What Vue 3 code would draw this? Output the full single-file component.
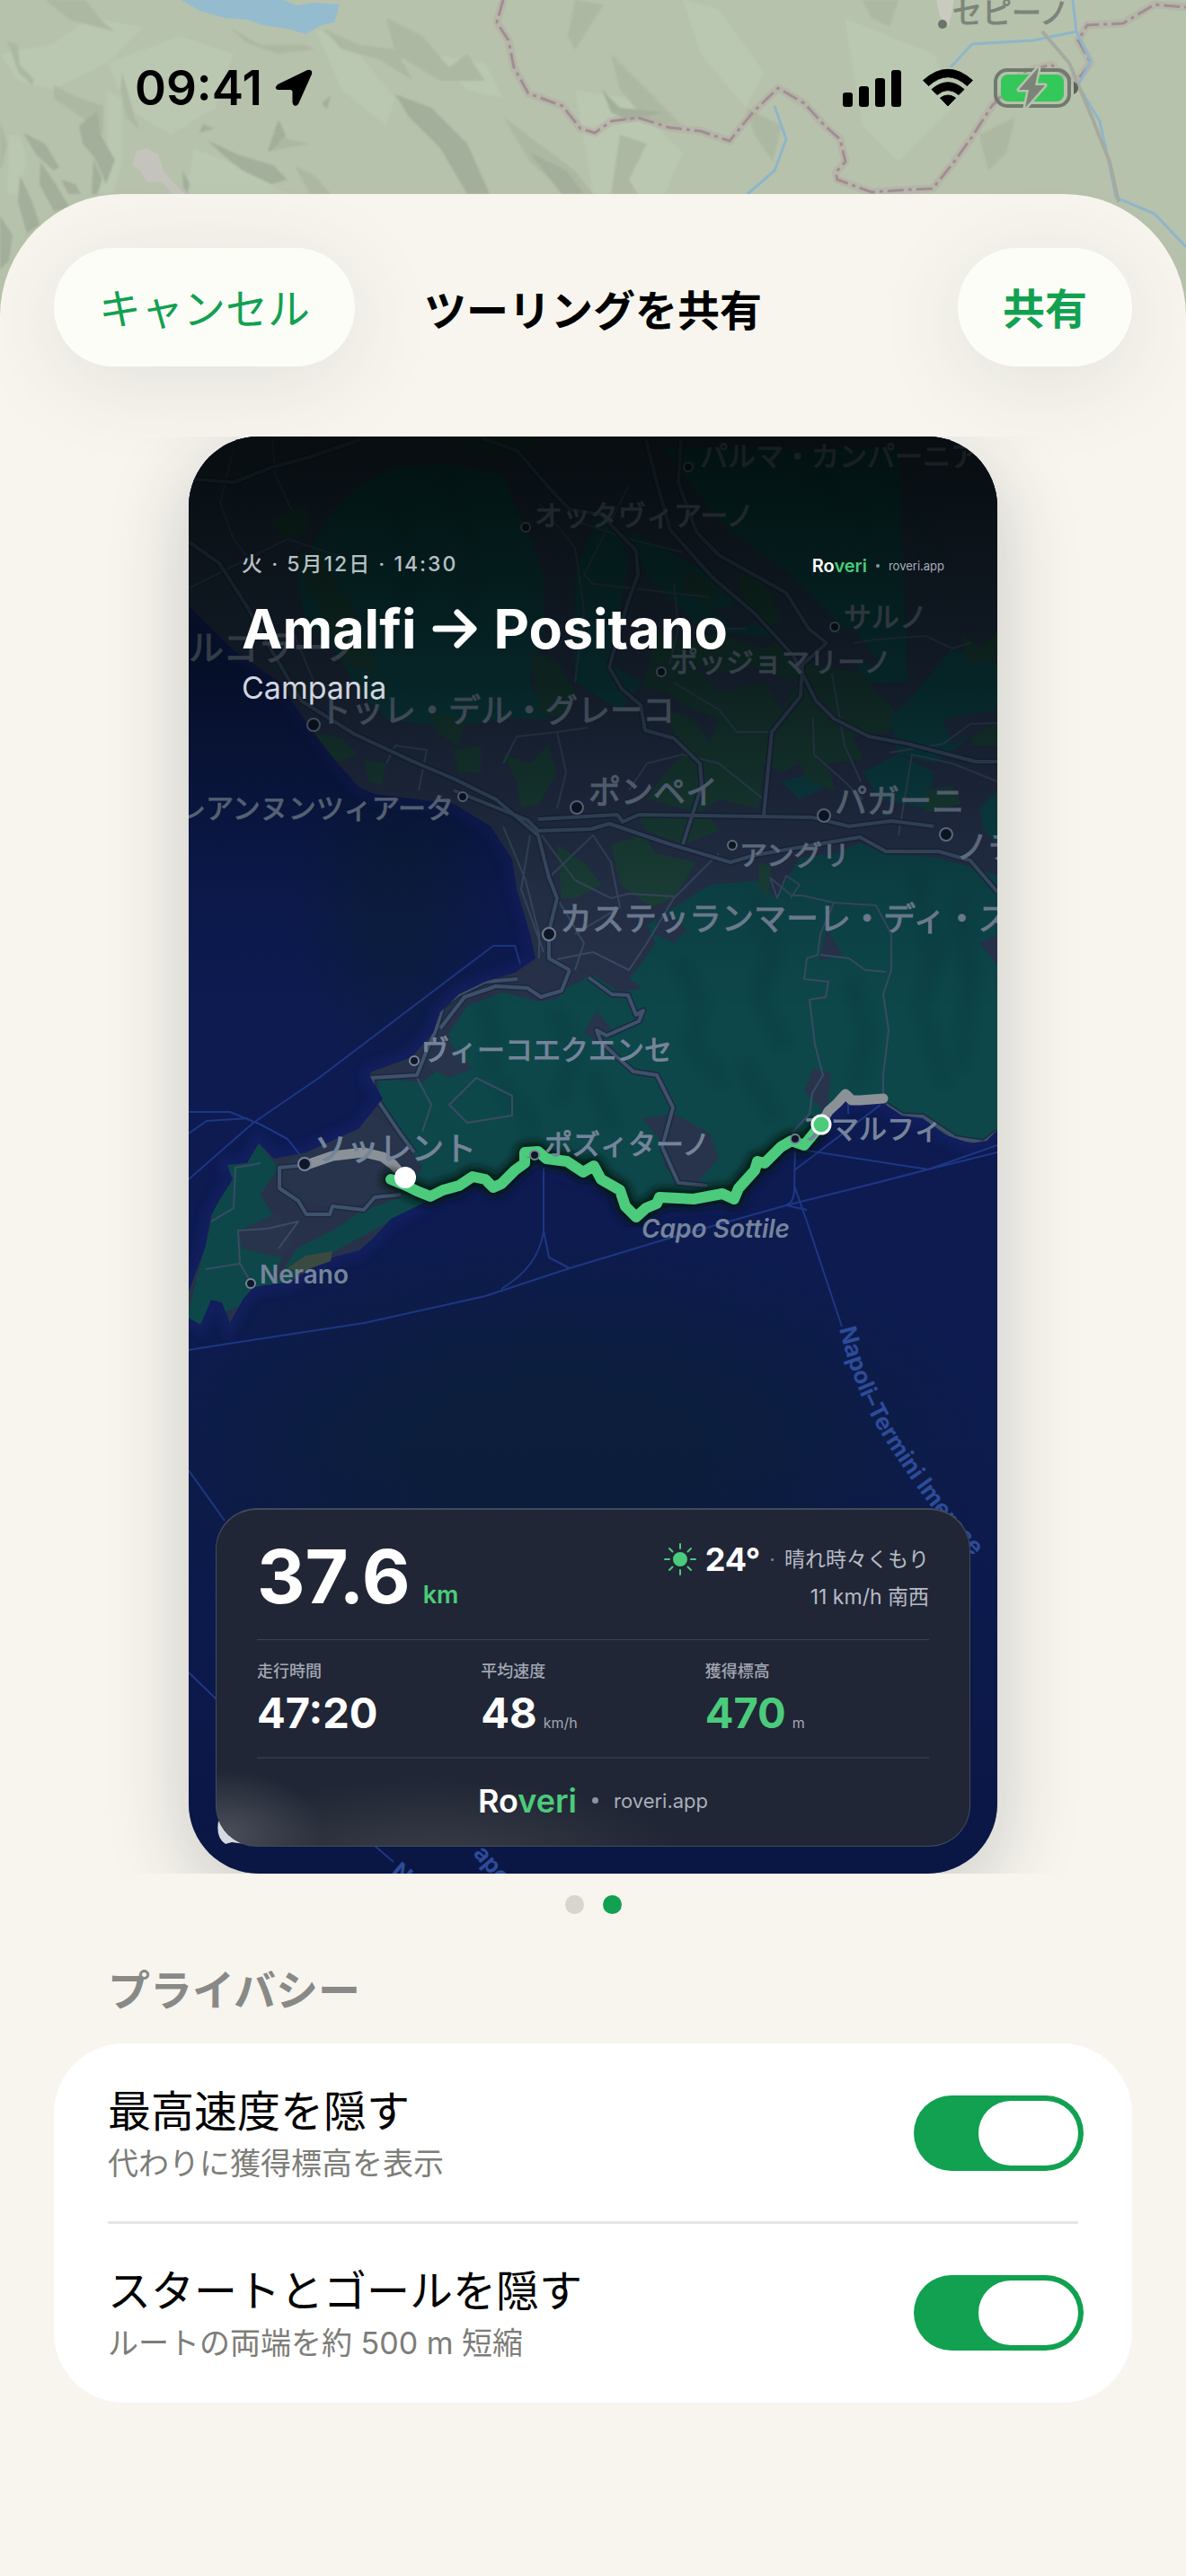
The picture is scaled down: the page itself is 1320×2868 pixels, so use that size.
<template>
  <div class="screen">
    <svg class="backdrop" viewBox="0 0 1320 400" preserveAspectRatio="xMidYMin slice" aria-hidden="true">
      <defs>
        <filter id="haze"><feGaussianBlur stdDeviation="1" /></filter>
      </defs>
      <rect width="1320" height="400" fill="#b6c2ab" />
      <g filter="url(#haze)">
        <path v-for="d in slopes.light" :key="d" :d="d" fill="#bac8b1" />
        <path v-for="d in slopes.mid" :key="d" :d="d" fill="#adb8a2" />
        <path v-for="d in slopes.dark" :key="d" :d="d" fill="#a3af9a" />
      </g>
      <path d="M202 0 222 12 250 20 276 22 292 28 320 32 340 38 358 28 372 25 378 5 350 3 330 6 315 0z" fill="#95bbcf" />
      <path d="M152 168 164 165 176 172 182 190 192 202 206 216H192L180 202 164 203 156 190 147 184z" fill="#c5c4bc" />
      <path d="M1042 0 1046 18 1056 30 1062 0z" fill="#c9cac0" />
      <g fill="none" stroke="#b4a9a4" stroke-width="9" stroke-linejoin="round" opacity="0.45">
        <path d="M560 0 553 25 566 45 572 75 588 104 626 118 646 143 662 148 680 135 710 131 745 142 780 146 812 157 838 125 866 98 895 115 918 140 935 155 941 180 930 192 932 200 970 214 1012 211 1038 210 1062 180 1080 155 1104 118 1140 80 1170 72 1197 92 1214 70 1200 45 1210 28 1250 26 1285 5 1320 8" />
      </g>
      <g fill="none" stroke="#a18d93" stroke-width="3" stroke-dasharray="18 5 4 5">
        <path d="M560 0 553 25 566 45 572 75 588 104 626 118 646 143 662 148 680 135 710 131 745 142 780 146 812 157 838 125 866 98 895 115 918 140 935 155 941 180 930 192 932 200 970 214 1012 211 1038 210 1062 180 1080 155 1104 118 1140 80 1170 72 1197 92 1214 70 1200 45 1210 28 1250 26 1285 5 1320 8" />
      </g>
      <g fill="none" stroke="#8fb5cb" stroke-width="3">
        <path d="M1194 0 1198 35 1150 45 1082 49 1058 75M1198 35 1214 68 1200 95 1224 135 1234 180 1242 220 1285 238 1320 275M862 118 875 155 862 190 832 216" />
      </g>
      <path d="M1160 35 1190 70 1215 130 1235 180 1245 225" fill="none" stroke="#a5aaa0" stroke-width="4" />
      <circle cx="1049" cy="27" r="5" fill="#6b736a" />
      <text class="backdrop-label" x="1060" y="26">セピーノ</text>
    </svg>

    <header class="status">
      <div class="status-left">
        <span class="clock">09:41</span>
        <svg width="42" height="42" viewBox="0 0 42 42" aria-hidden="true">
          <path d="M36 1 3 17Q-1.500 21 3 23H17Q19.500 23 19.500 25.500V37Q21 43.500 26 39L41 5.500Q42 0 36 1z" />
        </svg>
      </div>
      <div class="status-right">
        <svg width="66" height="44" viewBox="0 0 66 44" aria-hidden="true">
          <rect x="0" y="27" width="11" height="16" rx="3" />
          <rect x="18" y="20" width="11" height="23" rx="3" />
          <rect x="36" y="11" width="11" height="32" rx="3" />
          <rect x="54" y="2" width="11" height="41" rx="3" />
        </svg>
        <svg width="58" height="44" viewBox="0 0 58 44" aria-hidden="true">
          <path d="M1.500 13.500Q29-11 56.500 13.500L50.500 19.500Q29 0 7.500 19.500zM11 23.500Q29 8 47 23.500L41 29.500Q29 19.500 17 29.500zM20.500 33Q29 27 37.500 33L29 42z" stroke="#000" stroke-linejoin="round" />
        </svg>
        <svg width="94" height="48" viewBox="0 0 94 48" aria-hidden="true">
          <rect x="2" y="4" width="82" height="40" rx="13" fill="none" stroke="#707a6c" stroke-width="4" />
          <rect x="8" y="9" width="70" height="30" rx="8" fill="#34c759" />
          <path d="M89 17Q94 19 94 24T89 31z" fill="#5b645a" />
          <path d="M49 2 28 26H39L35 46 57 21H46L50 2z" fill="#7a8577" stroke="#b6c2ab" stroke-width="5" stroke-linejoin="round" paint-order="stroke" />
        </svg>
      </div>
    </header>

    <main class="sheet">
      <div class="toolbar">
        <button type="button" class="pill">キャンセル</button>
        <h1 class="toolbar-title">ツーリングを共有</h1>
        <button type="button" class="pill pill--strong">共有</button>
      </div>

      <div class="carousel">
        <article class="card">
          <svg class="map" viewBox="210 486 900 1600" preserveAspectRatio="xMidYMid slice" aria-hidden="true">
            <defs>
              <clipPath id="land"><path :d="land" /></clipPath>
              <linearGradient id="shade" x1="0" y1="0" x2="0" y2="1">
                <stop offset="0" stop-color="#000504" stop-opacity="0.82" />
                <stop offset="0.1" stop-color="#000605" stop-opacity="0.66" />
                <stop offset="0.17" stop-color="#000608" stop-opacity="0.54" />
                <stop offset="0.24" stop-color="#00060c" stop-opacity="0.34" />
                <stop offset="0.32" stop-color="#000610" stop-opacity="0.12" />
                <stop offset="0.4" stop-color="#000610" stop-opacity="0" />
                <stop offset="1" stop-color="#000610" stop-opacity="0" />
              </linearGradient>
              <radialGradient id="deep" cx="0.5" cy="0.5" r="0.5">
                <stop offset="0.3" stop-color="#0c1e3c" />
                <stop offset="1" stop-color="#0c1e3c" stop-opacity="0" />
              </radialGradient>
              <linearGradient id="floor" x1="0" y1="0" x2="0" y2="1">
                <stop offset="0" stop-color="#08143c" stop-opacity="0" />
                <stop offset="1" stop-color="#08143c" stop-opacity="0.6" />
              </linearGradient>
              <filter id="soft"><feGaussianBlur stdDeviation="5" /></filter>
            </defs>
            <rect x="210" y="486" width="900" height="1600" fill="#0d1b51" />
            <ellipse cx="620" cy="1620" rx="540" ry="260" fill="url(#deep)" />
            <ellipse cx="440" cy="1010" rx="110" ry="200" fill="url(#deep)" opacity="0.7" />
            <rect x="210" y="1600" width="900" height="486" fill="url(#floor)" />
            <path :d="land" fill="none" stroke="#15206a" stroke-width="20" opacity="0.5" filter="url(#soft)" />
            <path v-for="d in ferries" :key="d" class="ferry" :d="d" />
            <path :d="land" fill="#27324a" />
            <g clip-path="url(#land)">
              <path v-for="d in hills" :key="d" :d="d" fill="#0d474a" />
              <path v-for="d in farms" :key="d" :d="d" fill="#1c4339" />
              <path v-for="d in towns" :key="d" :d="d" fill="#27344c" />
              <path class="ridges" :d="ridges" filter="url(#soft)" />
              <path v-for="d in lanes" :key="d" class="lane" :d="d" />
              <path v-for="d in roads" :key="d" class="road-casing" :d="d" />
              <path v-for="d in roads" :key="d" class="road" :d="d" />
            </g>
            <path d="M320 1412 340 1398 370 1393 368 1404 335 1416z" fill="#3b4a40" />

            <path class="hidden-route" d="M341 1297 370 1287 405 1283 426 1288 438 1297 449 1310M914 1252 922 1237 932 1228 941 1218 948 1225 957 1225 983 1223" />
            <path class="route-shadow" :d="route" filter="url(#soft)" />
            <path class="route" :d="route" />

            <g v-for="place in places" :key="place.name">
              <circle v-if="place.dot" class="place-dot" :cx="place.dot[0]" :cy="place.dot[1]" :r="place.size > 32 ? 7 : 5" />
              <text
                class="place"
                :x="place.x"
                :y="place.y"
                :font-size="place.size"
                :text-anchor="place.end ? 'end' : 'start'"
              >{{ place.name }}</text>
            </g>
            <text class="place place--latin place--cape" x="714" y="1378">Capo Sottile</text>
            <circle class="place-dot" cx="279" cy="1429" r="5" />
            <text class="place place--latin" x="289" y="1429">Nerano</text>

            <path id="ferry-line" d="M934 1479Q950 1545 977 1590T1040 1682 1150 1800" fill="none" />
            <text class="ferry-name"><textPath href="#ferry-line">Napoli–Termini Imerese</textPath></text>
            <text class="ferry-name" transform="translate(434 2086) rotate(40)">N</text>
            <text class="ferry-name" transform="translate(526 2064) rotate(50)">apo</text>

            <rect x="210" y="486" width="900" height="1600" fill="url(#shade)" />
            <circle cx="451" cy="1311" r="12" fill="#fff" />
            <circle cx="914" cy="1252" r="10" fill="#4bcb7b" stroke="#fff" stroke-width="3" />
            <path d="M243 2028Q240 2046 251 2053L258 2051Q264 2052 275 2053V2020z" fill="#d5dae0" />
          </svg>

          <div class="card-head">
            <div class="card-meta">
              <span class="card-date">火 · 5月12日 · 14:30</span>
              <span class="brand brand--small"><b>Ro<i>veri</i></b><span class="brand-dot"></span><span class="brand-url">roveri.app</span></span>
            </div>
            <h2 class="card-title">
              Amalfi
              <svg width="50" height="44" viewBox="0 0 50 44" role="img" aria-label="→">
                <path d="M4 22H45M28 4 46 22 28 40" fill="none" stroke="#fff" stroke-width="7" stroke-linecap="round" stroke-linejoin="round" />
              </svg>
              Positano
            </h2>
            <p class="card-region">Campania</p>
          </div>

          <section class="panel">
            <div class="summary">
              <p class="distance">37.6<span>km</span></p>
              <div class="weather">
                <p class="weather-main">
                  <svg width="36" height="36" viewBox="0 0 36 36" aria-hidden="true">
                    <circle cx="18" cy="18" r="8" fill="#4bcb7b" />
                    <path d="M18 1V6M18 30V35M1 18H6M30 18H35M6 6 9.500 9.500M26.500 26.500 30 30M6 30 9.500 26.500M26.500 9.500 30 6" stroke="#4bcb7b" stroke-width="2" stroke-linecap="round" />
                  </svg>
                  <b>24°</b><span class="faint">·</span><span>晴れ時々くもり</span>
                </p>
                <p>11 km/h 南西</p>
              </div>
            </div>
            <dl class="stats">
              <div v-for="stat in stats" :key="stat.label" :class="{ 'stat--accent': stat.accent }">
                <dt>{{ stat.label }}</dt>
                <dd>{{ stat.value }}<span v-if="stat.unit">{{ stat.unit }}</span></dd>
              </div>
            </dl>
            <div class="brand brand--large"><b>Ro<i>veri</i></b><span class="brand-dot"></span><span class="brand-url">roveri.app</span></div>
          </section>
        </article>
      </div>

      <div class="pager">
        <button
          v-for="page in 2"
          :key="page"
          type="button"
          class="pager-dot"
          :class="{ 'pager-dot--active': state.page === page }"
          :aria-label="`${page}`"
          @click="state.page = page"
        ></button>
      </div>

      <section class="privacy">
        <h2 class="privacy-title">プライバシー</h2>
        <div class="options">
          <label v-for="option in options" :key="option.key" class="option">
            <span class="option-text">
              <span class="option-name">{{ option.name }}</span>
              <span class="option-note">{{ option.note }}</span>
            </span>
            <input v-model="state[option.key]" type="checkbox" role="switch" class="switch" />
          </label>
        </div>
      </section>
    </main>
  </div>
</template>

<script setup>
  import { reactive } from 'vue';

  const state = reactive({ page: 2, hideSpeed: true, hideEnds: true });

  const stats = [
    { label: '走行時間', value: '47:20' },
    { label: '平均速度', value: '48', unit: 'km/h' },
    { label: '獲得標高', value: '470', unit: 'm', accent: true }
  ];

  const options = [
    { key: 'hideSpeed', name: '最高速度を隠す', note: '代わりに獲得標高を表示' },
    { key: 'hideEnds', name: 'スタートとゴールを隠す', note: 'ルートの両端を約 500 m 短縮' }
  ];

  const places = [
    { name: 'パルマ・カンパーニア', x: 779, y: 519, size: 31, dot: [766, 520] },
    { name: 'オッタヴィアーノ', x: 595, y: 585, size: 31, dot: [585, 587] },
    { name: 'サルノ', x: 939, y: 698, size: 31, dot: [929, 698] },
    { name: 'ポッジョマリーノ', x: 746, y: 748, size: 31, dot: [736, 748] },
    { name: 'ルコラーノ', x: 402, y: 735, size: 39, end: true },
    { name: 'トッレ・デル・グレーコ', x: 355, y: 804, size: 36, dot: [349, 807] },
    { name: 'ポンペイ', x: 655, y: 895, size: 36, dot: [642, 899] },
    { name: 'パガーニ', x: 929, y: 905, size: 36, dot: [917, 908] },
    { name: 'レアンヌンツィアータ', x: 505, y: 911, size: 31, end: true, dot: [515, 887] },
    { name: 'アングリ', x: 823, y: 963, size: 31, dot: [815, 941] },
    { name: 'ノチ', x: 1064, y: 956, size: 36, dot: [1053, 929] },
    { name: 'カステッランマーレ・ディ・ス', x: 623, y: 1036, size: 36, dot: [611, 1040] },
    { name: 'ヴィーコエクエンセ', x: 469, y: 1180, size: 31, dot: [461, 1181] },
    { name: 'ソッレント', x: 350, y: 1292, size: 36, dot: [339, 1296] },
    { name: 'ポズィターノ', x: 606, y: 1285, size: 31, dot: [595, 1286] },
    { name: 'アマルフィ', x: 894, y: 1268, size: 31, dot: [885, 1268] }
  ];

  // hillshade facets behind the status bar
  const slopes = {
    light: [
      'M0 60 60 48 100 20 160 30 120 70 60 100 20 90z',
      'M120 70 200 40 260 60 240 120 190 150 140 120z',
      'M10 150 22 150 30 180 20 216H8z',
      'M118 100 135 110 136 180 126 216H110L120 160z',
      'M215 165 250 178 300 205 320 216H206L212 190z',
      'M350 30 400 60 440 110 430 140 380 100z',
      'M640 100 700 110 760 170 740 216H660z',
      'M760 0 800 10 850 80 830 120 780 60z',
      'M480 60 540 70 560 110 520 100z',
      'M940 20 1040 60 1060 120 1000 180 960 140z'
    ],
    mid: [
      'M50 0H95L115 25 128 35 100 28 78 22z',
      'M8 45 20 50 22 72 38 88 36 95 20 80z',
      'M60 95 85 108 115 118 115 150 90 130 60 110z',
      'M0 135 8 160 4 180 0 190z',
      'M255 30 290 50 340 50 350 55 310 60 275 48z',
      'M360 32 400 50 440 55 460 90 420 65 380 55z',
      'M310 135 320 155 346 160 300 168z',
      'M328 185 350 195 368 216H345z',
      'M136 80 150 130 156 145 140 130 134 100z',
      'M430 20 470 40 500 75 520 60 540 90 490 90 440 60z',
      'M640 0 672 5 640 55 632 40z',
      'M680 60 710 90 740 120 760 140 720 135 690 100z',
      'M690 150 720 160 700 200 710 216H680z',
      'M830 120 870 140 860 180 840 150z',
      'M560 130 600 160 640 190 660 216H630L590 180z',
      'M960 0H1000L990 30 970 20z',
      'M1090 150 1130 130 1120 170 1100 190z'
    ],
    dark: [
      'M88 140 108 124 112 150 128 178 118 205 105 175 92 160z',
      'M26 148 50 160 66 186 60 190 40 172z',
      'M45 180 62 205 78 232 60 235 44 205z',
      'M22 195 36 225 44 250 30 260 20 225z',
      'M68 200 84 205 90 216H76z',
      'M104 178 114 200 108 216H102z',
      'M232 157 250 165 264 172 304 184 320 200 302 205 270 190 250 174z',
      'M203 190 211 204 209 216 204 208z',
      'M219 155 226 138 238 143 222 148z',
      'M310 133 318 150 302 168 298 168z',
      'M358 115 368 106 364 122z',
      'M440 105 480 120 520 160 545 216H520L490 165 455 130z',
      'M590 170 630 190 650 216H625z',
      'M670 100 690 120 740 125 700 135 680 125z',
      'M0 240 14 262 10 290 0 300z'
    ]
  };

  const route = 'M435 1313 452 1320 464 1326 479 1332 493 1325 511 1320 526 1310 540 1313 549 1322 558 1318 573 1303 584 1295 584 1283 599 1282 608 1290 631 1293 649 1305 661 1298 669 1313 690 1325 696 1343 708 1355 719 1345 731 1340 734 1333 772 1335 804 1329 817 1335 822 1323 840 1303 843 1293 851 1295 869 1277 881 1270 895 1275 913 1253';

  const land = 'M210 486V675L259 723 311 760 347 813 376 850 400 877 417 884 505 895 546 920 570 957 575 990 590 1040 596 1067 573 1083 540 1093 511 1107 490 1127 482 1150 458 1177 414 1193 411 1197 426 1223 399 1257 341 1283 305 1290 288 1273 275 1295 253 1297 259 1313 245 1335 235 1353 229 1387 212 1433 205 1450 210 1467 223 1475 235 1447 247 1450 256 1473 270 1447 282 1433 323 1427 350 1410 370 1400 400 1392 417 1377 435 1357 464 1343 479 1335 526 1313 549 1325 584 1300 600 1292 649 1308 669 1316 690 1328 700 1350 731 1343 772 1338 817 1338 840 1305 881 1274 914 1256 941 1224 983 1228 1004 1242 1027 1245 1051 1263 1080 1273 1098 1270 1110 1258V486z';

  const hills = [
    'M400 540 440 520 500 515 560 530 575 570 590 600 605 640 605 700 590 760 610 800 560 800 500 810 430 800 400 770 370 720 340 690 330 640 370 570z',
    'M670 560 700 620 680 740 715 760 690 790 640 760 640 640z',
    'M730 486H1110V740L1060 720 1020 770 990 800 1000 840 1040 850 1110 800V486z',
    'M740 500 800 580 880 640 940 700 960 760 1010 760 1000 500z',
    'M700 590 790 640 860 710 780 700 720 640z',
    'M960 860 1000 840 1040 860 1030 900 980 890z',
    'M1090 900 1110 880V940L1095 925z',
    'M870 870 900 862 920 875 890 890z',
    'M1110 975 1080 965 1045 955 986 950 957 938 930 950 890 955 875 980 862 1000 850 980 790 985 750 1010 720 1030 730 1050 712 1075 700 1090 715 1100 690 1105 660 1085 630 1100 620 1112 600 1115 560 1105 520 1120 500 1150 502 1180 470 1205 420 1200 425 1240 450 1270 470 1300 440 1340 500 1345 800 1345 1110 1300z',
    'M288 1273 250 1300 225 1400 205 1480 300 1440 320 1380 290 1330 310 1300z',
    'M300 1440 360 1400 470 1340 440 1335 400 1350 370 1370 330 1390z'
  ];

  const farms = [
    'M730 705 770 712 800 705 850 722 870 712 885 722 880 735 960 750 975 770 995 790 990 815 950 820 960 845 920 850 930 880 900 870 890 850 870 860 850 850 830 865 800 870 780 850 800 800 770 790 740 770 715 765z',
    'M740 790 770 800 800 840 850 850 845 900 800 890 780 905 720 890 740 860 760 840z',
    'M820 640 850 645 870 690 850 700 830 670z',
    'M760 630 800 655 790 675 760 660z',
    'M350 815 380 822 398 840 370 850 355 838z',
    'M405 845 430 850 425 875 410 870z',
    'M505 835 535 830 535 860 510 860z',
    'M560 840 590 850 610 830 620 860 600 895 580 900 575 870z',
    'M590 725 620 735 640 770 630 800 600 795z',
    'M480 795 520 800 510 830 485 815z',
    'M620 940 650 960 670 985 640 1000 625 1000z',
    'M680 940 715 930 730 950 775 960 750 1000 725 1010 690 985z',
    'M710 910 790 910 800 925 760 940 720 925z',
    'M845 960 858 965 855 1000 845 990z',
    'M1070 705 1090 720 1110 705V735L1075 738z',
    'M1030 880 1060 875 1070 895 1030 905z',
    'M1085 810 1110 805V830H1080z',
    'M300 580 340 560 345 590 320 600z',
    'M330 620 350 610 400 690 420 750 385 740z',
    'M500 486H600L590 500 540 510z',
    'M300 735 330 760 345 785 320 760z'
  ];

  const towns = [
    'M414 1240 440 1260 461 1283 450 1330 410 1340 370 1345 330 1335 310 1300 341 1283z',
    'M715 1245 750 1240 790 1262 800 1290 770 1322 740 1300 735 1270z',
    'M905 1190 925 1195 920 1240 895 1215z',
    'M265 1370 310 1350 330 1385 310 1400 270 1390z',
    'M664 1125 680 1145 665 1160 650 1150z',
    'M920 1035 938 1062 912 1070z',
    'M460 1180 500 1160 525 1190 500 1200z',
    'M1090 1050 1110 1040V1075z',
    'M790 680 830 670 850 690 820 700z',
    'M770 740 800 750 830 740 890 760 870 790 850 760 800 770z',
    'M900 690 950 700 980 740 930 735 905 720z',
    'M1050 800 1110 790V805L1060 830z',
    'M735 1010 765 1035 750 1050 728 1040z'
  ];

  const ridges = 'M540 1120 550 1160 545 1190M620 1130 640 1170 625 1220M760 1080 780 1120 770 1160 800 1200M840 1000 860 1060 845 1110 870 1160M1020 980 1040 1060 1025 1120 1050 1200M1070 1000 1080 1090 1070 1180M950 1100 965 1150 955 1200M560 1210 590 1250M660 1200 680 1250M830 1190 860 1240M440 560 460 640 440 700M500 540 530 620 510 700M900 520 960 580M1000 540 1040 620';

  const roads = [
    'M210 533 260 537 303 520 341 510 400 490',
    'M537 488 576 502 611 543 634 567 669 573 708 613 710 640 699 670 678 743 692 767 713 785 718 813 750 822 779 850 781 875 760 940',
    'M719 490 731 537 746 590 793 643 840 683 883 730 908 780 928 800 967 820 1010 828 1086 848 1110 848',
    'M758 490 755 537 775 592 800 618 875 660 900 700 920 716 893 740 891 775 859 815 850 908',
    'M210 603 244 627 276 677 300 720 335 780 394 817 458 847 505 867 552 890 599 930 611 977 620 1000 611 1037 611 1067 634 1080',
    'M505 880 587 913 599 925 658 923 678 917 746 940 813 960 840 952 898 942 957 932 986 948 1045 948 1080 958 1110 993',
    'M599 912 687 907 693 915 711 907 904 910 945 920 992 914 1039 920',
    'M576 1090 540 1093 511 1107 493 1120 485 1147 476 1167 464 1197 414 1200 417 1220 444 1260 461 1283',
    'M634 1080 625 1103 602 1110 587 1100 552 1098 517 1110 490 1145',
    'M655 1088 681 1107 699 1108 708 1130 716 1125 711 1137 675 1153 664 1147 669 1160 687 1177 705 1193 731 1197 749 1233 737 1277 755 1317 787 1320',
    'M446 1330 417 1333 405 1347 370 1343 367 1352 341 1352 332 1337 311 1323 311 1300 341 1297',
    'M986 1230 1004 1242 1027 1243 1063 1267 1095 1272 1110 1260'
  ];

  const lanes = [
    'M303 487 306 527 324 567M260 500 245 560 260 600 290 640M320 690 350 760M210 655 260 630 320 600 380 620',
    'M600 560 640 610 650 680 640 760M640 580 700 600 760 615M700 540 670 600 650 640 660 650 790 665M750 650 755 700 745 740',
    'M750 760 800 790 820 815 858 815M800 690 790 700 830 700M905 800 906 840 940 870 960 890M926 750 940 830 958 870',
    'M430 850 440 830 475 835 466 880M560 850 575 820 620 815 655 810M620 815 630 860 620 900M700 880 720 850 760 840 800 850 850 890',
    'M950 716 975 712 1030 708 1060 722 1080 716M1110 805 1080 806 1050 828 990 838M1000 930 1015 840 1060 850 1110 870',
    'M857 977 881 997 893 997 928 1005 975 1008 992 1040 992 1080 983 1107 989 1147 983 1197 983 1220',
    'M928 1005 913 1040 910 1063 898 1067 895 1090 922 1093 919 1110 901 1113 907 1163 916 1197 904 1217 901 1240 881 1262',
    'M913 1063 945 1067 963 1080 986 1082M857 977 865 1000 875 975 890 985 880 1000',
    'M229 1413 267 1407 265 1370 297 1368 332 1360 310 1390M267 1407 279 1427M235 1360 260 1345 262 1300 290 1295',
    'M560 920 585 980 600 1040 600 1067M590 930 580 990 605 1060M599 925 640 980 680 1000 700 995 750 998',
    'M620 1000 650 1050 640 1080M610 1070 660 1060 700 1080 720 1050 750 1000 800 950',
    'M611 977 660 930 680 960 690 1010 640 1040',
    'M464 1200 480 1230 470 1260M530 1200 570 1220 570 1242 520 1250 500 1230 530 1200'
  ];

  const ferries = [
    'M210 1313 282 1250 355 1200 549 1053 573 1053 579 1073',
    'M210 1238H256L290 1252 320 1268 337 1290M210 1262 230 1248 276 1245',
    'M210 1503 235 1499 405 1473 540 1443 634 1412 740 1380 875 1342 963 1320 1033 1302 1110 1283',
    'M605 1300V1370Q600 1410 558 1435M605 1370 611 1400 634 1412',
    'M885 1277 884 1320 898 1360 937 1477M892 1280 1033 1302 1110 1275M980 1230 884 1303M944 1224V1240M884 1320Q885 1338 875 1342L898 1347',
    'M210 1637 250 1693M210 1862 241 1892M417 2055 438 2073'
  ];
</script>

<style>
body {
  margin: 0;
  background: #f7f5ee;
}
</style>

<style scoped>
.screen {
  position: relative;
  display: flex;
  flex-direction: column;
  min-height: 100vh;
  font-family: Inter, "Noto Sans CJK JP", sans-serif;
  color: #000;
}

h1,
h2,
p,
dl,
dd {
  margin: 0;
}

button {
  border: 0;
  padding: 0;
  font-family: inherit;
  cursor: pointer;
}

.backdrop {
  position: absolute;
  top: 0;
  left: 0;
  width: 100%;
  height: 400px;
}

.backdrop-label {
  font-size: 33px;
  fill: #7d847a;
  stroke: #7d847a;
  stroke-width: 1;
}

.status {
  position: relative;
  display: flex;
  align-items: flex-start;
  justify-content: space-between;
  height: 216px;
  padding: 66px 120px 0 150px;
  box-sizing: border-box;
}

.status-left,
.status-right {
  display: flex;
  align-items: center;
  height: 64px;
}

.status-left {
  gap: 14px;
}

.status-right {
  gap: 22px;
}

.clock {
  font-size: 53px;
  font-weight: 600;
}

.sheet {
  position: relative;
  flex: 1;
  padding-top: 60px;
  border-radius: 136px 136px 0 0;
  background: #f7f5ee;
}

.toolbar {
  display: grid;
  grid-template-columns: 1fr auto 1fr;
  align-items: center;
  padding: 0 60px;
}

.toolbar-title {
  font-size: 47px;
  font-weight: 700;
}

.pill {
  justify-self: start;
  height: 132px;
  padding: 0 50px 4px;
  border-radius: 66px;
  background: #fdfdf8;
  box-shadow: 0 16px 100px rgba(60, 60, 70, 0.11);
  font-size: 47px;
  color: #11a150;
}

.pill--strong {
  justify-self: end;
  font-weight: 700;
}

.carousel {
  display: flex;
  justify-content: center;
  margin-top: 78px;
  overflow: hidden;
}

.card {
  position: relative;
  display: flex;
  flex-direction: column;
  justify-content: space-between;
  width: 100%;
  max-width: 900px;
  aspect-ratio: 9 / 16;
  box-sizing: border-box;
  padding: 120px 30px 30px;
  border-radius: 78px;
  overflow: hidden;
  color: #fff;
  box-shadow: 0 24px 90px rgba(40, 40, 50, 0.22);
}

.map {
  position: absolute;
  inset: 0;
  width: 100%;
  height: 100%;
}

.place {
  fill: #76849a;
  stroke: #76849a;
  stroke-width: 1;
}

.place--latin {
  font-size: 28px;
  font-weight: 600;
  stroke: none;
}

.place--cape {
  font-style: italic;
}

.place-dot {
  fill: #101828;
  stroke: #76849a;
  stroke-width: 2;
}

.ridges {
  fill: none;
  stroke: #0a3a40;
  stroke-width: 18;
  stroke-linecap: round;
  opacity: 0.3;
}

.lane,
.road,
.road-casing,
.ferry {
  fill: none;
  stroke: #3a4c64;
  stroke-width: 2;
  stroke-linejoin: round;
}

.road {
  stroke: #3f516b;
  stroke-width: 4;
}

.road-casing {
  stroke: #1c2a40;
  stroke-width: 7;
}

.ferry {
  stroke: #1e3784;
}

.ferry-name {
  font-size: 26px;
  font-weight: 700;
  fill: #2d4b99;
}

.route,
.route-shadow,
.hidden-route {
  fill: none;
  stroke: #4bcb7b;
  stroke-width: 12;
  stroke-linecap: round;
  stroke-linejoin: round;
}

.route-shadow {
  stroke: #03130f;
  stroke-width: 20;
}

.hidden-route {
  stroke: #8b9297;
  stroke-width: 11;
}

.card-head,
.panel {
  position: relative;
}

.card-head {
  padding: 0 29px;
}

.card-meta {
  display: flex;
  align-items: center;
  justify-content: space-between;
  line-height: 40px;
}

.card-date {
  font-size: 23px;
  font-weight: 500;
  letter-spacing: 2px;
  color: #b7c0c4;
}

.card-title {
  display: flex;
  align-items: center;
  gap: 18px;
  margin-top: 8px;
  font-size: 61px;
  font-weight: 700;
  line-height: 84px;
}

.card-region {
  font-size: 34px;
  line-height: 48px;
  color: #d0d5de;
}

.brand {
  display: flex;
  align-items: center;
  justify-content: center;
}

.brand b {
  font-weight: 600;
}

.brand i {
  font-style: normal;
  color: #4bcb7b;
}

.brand-dot {
  border-radius: 50%;
  background: #8d93a1;
}

.brand-url {
  color: #a9aeb9;
}

.brand--small {
  gap: 10px;
  padding-top: 4px;
  font-size: 20px;
}

.brand--small .brand-dot {
  width: 4px;
  height: 4px;
}

.brand--small .brand-url {
  font-size: 13px;
}

.brand--large {
  flex: 1;
  gap: 17px;
  padding-bottom: 4px;
  font-size: 36px;
}

.brand--large .brand-dot {
  width: 7px;
  height: 7px;
}

.brand--large .brand-url {
  font-size: 22px;
}

.panel {
  display: flex;
  flex-direction: column;
  height: 377px;
  box-sizing: border-box;
  padding: 0 45px;
  border: 1px solid #414a5b;
  border-top: 2px solid #414a5b;
  border-radius: 46px;
  background:
    radial-gradient(ellipse 110px 70px at 10px 360px, #4a4e59, transparent),
    radial-gradient(ellipse 280px 90px at 240px 390px, #3a3d47, transparent),
    #202635;
}

.summary {
  display: flex;
  justify-content: space-between;
  height: 145px;
  box-sizing: border-box;
  padding-top: 26px;
  border-bottom: 1px solid #3b4250;
}

.distance {
  font-size: 83px;
  font-weight: 700;
  line-height: 96px;
}

.distance span {
  margin-left: 14px;
  font-size: 27px;
  font-weight: 600;
  color: #4bcb7b;
}

.weather {
  font-size: 23px;
  line-height: 42px;
  text-align: right;
  color: #b6bbc6;
}

.weather-main {
  display: flex;
  align-items: center;
  justify-content: flex-end;
  gap: 10px;
  padding-top: 8px;
}

.weather-main b {
  font-size: 36px;
  color: #fff;
}

.faint {
  color: #7b8290;
}

.stats {
  display: grid;
  grid-template-columns: repeat(3, 1fr);
  height: 132px;
  box-sizing: border-box;
  padding-top: 22px;
  border-bottom: 2px solid #303646;
}

.stats dt {
  font-size: 18px;
  font-weight: 500;
  line-height: 26px;
  color: #a3a8b4;
}

.stats dd {
  font-size: 47px;
  font-weight: 700;
  line-height: 66px;
}

.stats span {
  margin-left: 7px;
  font-size: 16px;
  font-weight: 400;
  color: #a3a8b4;
}

.stat--accent dd {
  color: #4bcb7b;
}

.pager {
  display: flex;
  justify-content: center;
  gap: 21px;
  padding-top: 24px;
}

.pager-dot {
  width: 21px;
  height: 21px;
  border-radius: 50%;
  background: #d7d5cc;
}

.pager-dot--active {
  background: #11a150;
}

.privacy {
  padding: 50px 60px 0;
}

.privacy-title {
  padding-left: 60px;
  font-size: 47px;
  font-weight: 700;
  line-height: 70px;
  color: #898987;
}

.options {
  margin-top: 24px;
  border-radius: 78px;
  background: #fff;
}

.option {
  position: relative;
  display: flex;
  align-items: center;
  justify-content: space-between;
  height: 200px;
  padding: 0 54px 0 60px;
}

.option + .option::before {
  content: "";
  position: absolute;
  top: -2px;
  left: 60px;
  right: 60px;
  height: 3px;
  background: #e6e6e6;
}

.option-text {
  display: flex;
  flex-direction: column;
  gap: 4px;
}

.option-name {
  font-size: 48px;
  line-height: 64px;
}

.option-note {
  font-size: 34px;
  line-height: 44px;
  color: #7d7d78;
}

.switch {
  appearance: none;
  display: flex;
  width: 189px;
  height: 84px;
  margin: 0;
  padding: 6px;
  box-sizing: border-box;
  border-radius: 42px;
  background: #d9d9d6;
  cursor: pointer;
}

.switch::before {
  content: "";
  width: 111px;
  border-radius: 36px;
  background: #fff;
}

.switch:checked {
  justify-content: flex-end;
  background: #11a150;
}
</style>
